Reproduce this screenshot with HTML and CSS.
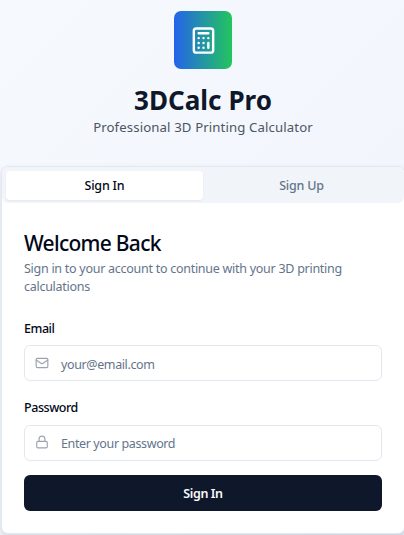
FILE: index.html
```html
<!DOCTYPE html>
<html lang="en">
<head>
<meta charset="utf-8">
<title>3DCalc Pro</title>
<link rel="stylesheet" href="styles.css">
</head>
<body>
<main class="page">
  <header class="brand">
    <div class="logo">
      <svg class="logo-icon" viewBox="0 0 24 24"><rect x="4" y="2" width="16" height="20" rx="2"/><path d="M8 6h8M16 14v4M16 10h.01M12 10h.01M8 10h.01M12 14h.01M8 14h.01M12 18h.01M8 18h.01"/></svg>
    </div>
    <h1 class="title"><span>3DCalc Pro</span></h1>
    <p class="tagline"><span>Professional 3D Printing Calculator</span></p>
  </header>
  <section class="card">
    <div class="tabs">
      <button class="tab active"><span>Sign In</span></button>
      <button class="tab"><span>Sign Up</span></button>
    </div>
    <form class="form">
      <h2 class="heading"><span>Welcome Back</span></h2>
      <p class="description"><span>Sign in to your account to continue with your 3D printing</span><br><span>calculations</span></p>
      <label class="label"><span>Email</span></label>
      <div class="field email">
        <svg class="icon" viewBox="0 0 24 24"><rect x="2" y="4" width="20" height="16" rx="2"/><path d="m22 7-8.97 5.7a1.94 1.94 0 0 1-2.06 0L2 7"/></svg>
        <span>your@email.com</span>
      </div>
      <label class="label"><span>Password</span></label>
      <div class="field password">
        <svg class="icon" viewBox="0 0 24 24"><rect x="3" y="11" width="18" height="11" rx="2"/><path d="M7 11V7a5 5 0 0 1 10 0v4"/></svg>
        <span>Enter your password</span>
      </div>
      <button class="submit" type="button"><span>Sign In</span></button>
    </form>
  </section>
</main>
</body>
</html>
```
FILE: styles.css
```css
* { box-sizing: border-box; }
body {
  margin: 0;
  height: 535px;
  overflow: hidden;
  background: linear-gradient(135deg, #f6f9fe, #f2f6fc 60%, #e6eaf2);
  color: #020817;
  font-family: "Noto Sans", sans-serif;
  font-size: 12.5px;
}
h1, h2, p { margin: 0; white-space: nowrap; }
button { font: inherit; border: 0; padding: 0; }
svg { fill: none; stroke: currentColor; stroke-width: 2; stroke-linecap: round; stroke-linejoin: round; flex: none; }
.page { padding: 11px 0 0 1px; }
.brand { display: flex; flex-direction: column; align-items: center; height: 155px; padding-left: 1px; }
.logo {
  display: grid;
  place-items: center;
  width: 58px;
  height: 58px;
  border-radius: 7px;
  color: #fff;
  background: linear-gradient(90deg, #2563eb, #22c55e);
}
.logo-icon { width: 29px; height: 29px; }
.title { margin-top: 15px; font-size: 26px; line-height: 33px; font-weight: 700; letter-spacing: .05px; color: #0f172a; }
.tagline { font-size: 13.2px; line-height: 20px; letter-spacing: .12px; color: #4b5563; }
.card {
  width: 404px;
  height: 368px;
  border: 1px solid #e2e8f0;
  border-radius: 7px;
  background: #fff;
  box-shadow: 0 3px 6px rgba(15, 23, 42, .12);
}
.tabs {
  display: grid;
  grid-template-columns: 197px 1fr;
  height: 36px;
  padding: 4px 4px 3px 4px;
  border-radius: 6px;
  background: #f1f5f9;
}
.tab { background: none; border-radius: 4px; color: #64748b; font-weight: 500; line-height: 29px; letter-spacing: -.2px; }
.tab.active { background: #fff; color: #020817; box-shadow: 0 1px 2px rgba(0, 0, 0, .06); }
.form { display: flex; flex-direction: column; padding: 26px 22px 0; }
.heading { font-size: 21px; line-height: 28px; font-weight: 500; letter-spacing: -.72px; }
.description { margin-top: 3px; line-height: 18px; letter-spacing: -.27px; color: #64748b; }
.label { margin-top: 25px; line-height: 16px; font-weight: 500; letter-spacing: -.45px; }
.field {
  display: flex;
  align-items: center;
  gap: 12px;
  height: 36px;
  padding: 0 10px;
  border: 1px solid #e2e8f0;
  border-radius: 6px;
  color: #64748b;
  letter-spacing: -.38px;
}
.field + .label { margin-top: 19px; }
.email { margin-top: 8px; padding-top: 2px; }
.password { margin-top: 9px; }
.icon { width: 14px; height: 14px; color: #9ca3af; margin-bottom: 2px; }
.submit { height: 36px; margin-top: 14px; border-radius: 6px; background: #0f172a; color: #f8fafc; font-weight: 600; letter-spacing: -.4px; }
```
